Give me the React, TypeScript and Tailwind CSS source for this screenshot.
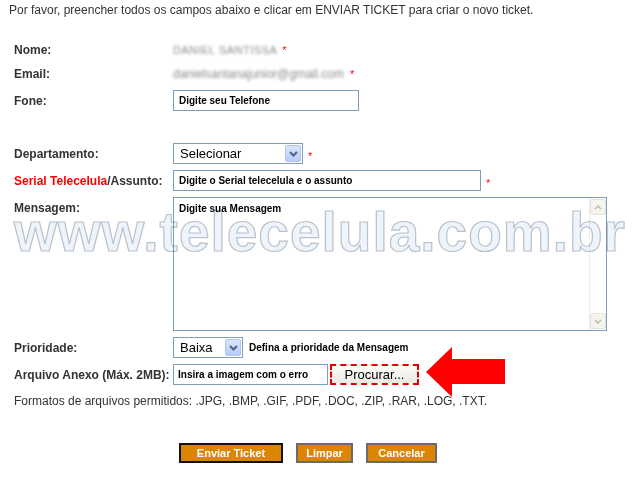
import React from 'react';

const labelCls = 'w-[159px] shrink-0 text-[12px] font-bold leading-[14px] text-[#333]';
const boxCls = 'flex items-center border border-[#7f9db9] bg-white';

function Star({ className = '' }: { className?: string }) {
  return <span className={`text-[11px] leading-[11px] text-[#ff0000] ${className}`}>*</span>;
}

function DropButton() {
  return (
    <div className="flex h-[17px] w-[16px] shrink-0 items-center justify-center rounded-[2px] border border-[#b1c5f3] bg-gradient-to-b from-[#dbe6fe] to-[#b6cbf8]">
      <svg width="9" height="6" viewBox="0 0 9 6">
        <path d="M1 1l3.5 3.5L8 1" stroke="#4d6185" strokeWidth="2" fill="none" />
      </svg>
    </div>
  );
}

function Select({ value, width }: { value: string; width: string }) {
  return (
    <div className={`${boxCls} h-[21px] ${width} p-[1px]`}>
      <span className="flex-1 pl-[5px] text-[13px] leading-[17px] text-black">{value}</span>
      <DropButton />
    </div>
  );
}

function ScrollArrow({ up }: { up?: boolean }) {
  return (
    <div className="flex h-[16px] w-[16px] items-center justify-center rounded-[2px] border border-[#e3e2db] bg-[#f5f4ef]">
      <svg width="8" height="5" viewBox="0 0 8 5">
        <path d={up ? 'M1 4l3-3 3 3' : 'M1 1l3 3 3-3'} stroke="#b8b8b0" strokeWidth="1.4" fill="none" />
      </svg>
    </div>
  );
}

function OrangeButton({ label, width, focused }: { label: string; width: string; focused?: boolean }) {
  return (
    <div
      className={`flex h-[20px] ${width} items-center justify-center border-2 ${
        focused ? 'border-[#111]' : 'border-[#6b6b6b]'
      } bg-[#dc8500] text-[11px] font-bold text-white`}
    >
      {label}
    </div>
  );
}

export default function App() {
  return (
    <div className="relative h-[480px] w-[640px] overflow-hidden bg-white font-['Liberation_Sans',Arial,sans-serif] text-[#333]">
      <div className="mt-[3px] h-[14px] pl-[9px] text-[12px] leading-[14px]">
        Por favor, preencher todos os campos abaixo e clicar em ENVIAR TICKET para criar o novo ticket.
      </div>

      <div className="flex flex-col pl-[14px]">
        {/* Nome */}
        <div className="mt-[23px] flex h-[20px] items-center">
          <div className={labelCls}>Nome:</div>
          <span className="text-[11px] uppercase tracking-[0.5px] text-[#8a8a8a] blur-[1.4px]">Daniel Santissa</span>
          <Star className="ml-[5px]" />
        </div>

        {/* Email */}
        <div className="mt-[4px] flex h-[20px] items-center">
          <div className={labelCls}>Email:</div>
          <span className="text-[12px] text-[#8a8a8a] blur-[1.4px]">danielsantanajunior@gmail.com</span>
          <Star className="ml-[6px]" />
        </div>

        {/* Fone */}
        <div className="mt-[6px] flex h-[21px] items-center">
          <div className={labelCls}>Fone:</div>
          <div className={`${boxCls} h-[21px] w-[186px] pl-[5px] text-[10px] font-bold text-black`}>Digite seu Telefone</div>
        </div>

        {/* Departamento */}
        <div className="mt-[32px] flex h-[21px] items-center">
          <div className={labelCls}>Departamento:</div>
          <Select value="Selecionar" width="w-[130px]" />
          <Star className="ml-[5px] mt-[5px]" />
        </div>

        {/* Serial */}
        <div className="mt-[6px] flex h-[21px] items-center">
          <div className={labelCls}>
            <span className="text-[#ff0000]">Serial Telecelula</span>/Assunto:
          </div>
          <div className={`${boxCls} h-[21px] w-[308px] pl-[5px] text-[10px] font-bold text-black`}>
            Digite o Serial telecelula e o assunto
          </div>
          <Star className="ml-[5px] mt-[6px]" />
        </div>

        {/* Mensagem */}
        <div className="mt-[6px] flex h-[134px] items-start">
          <div className={`${labelCls} pt-[4px]`}>Mensagem:</div>
          <div className="flex h-[134px] w-[434px] border border-[#7f9db9] bg-white">
            <div className="flex-1 pl-[5px] pt-[5px] text-[10px] font-bold leading-[12px] text-black">Digite sua Mensagem</div>
            <div className="flex w-[17px] flex-col justify-between border-l border-[#ecece8] py-[1px] pr-[1px]">
              <ScrollArrow up />
              <ScrollArrow />
            </div>
          </div>
        </div>

        {/* Prioridade */}
        <div className="mt-[6px] flex h-[21px] items-center">
          <div className={labelCls}>Prioridade:</div>
          <Select value="Baixa" width="w-[70px]" />
          <span className="ml-[6px] text-[10px] font-bold text-black">Defina a prioridade da Mensagem</span>
        </div>

        {/* Arquivo */}
        <div className="mt-[6px] flex h-[21px] items-center">
          <div className={labelCls}>Arquivo Anexo (Máx. 2MB):</div>
          <div className={`${boxCls} h-[21px] w-[155px] pl-[4px] text-[10px] font-bold text-black`}>Insira a imagem com o erro</div>
          <div className="ml-[2px] flex h-[21px] w-[89px] items-center justify-center border-2 border-dashed border-[#e10000] bg-gradient-to-b from-[#fbfbf9] to-[#eceae2] text-[13px] text-black">
            Procurar...
          </div>
        </div>

        {/* Formatos */}
        <div className="mt-[9px] h-[14px] text-[12px] leading-[14px]">
          Formatos de arquivos permitidos: .JPG, .BMP, .GIF, .PDF, .DOC, .ZIP, .RAR, .LOG, .TXT.
        </div>
      </div>

      {/* Buttons */}
      <div className="mt-[35px] flex gap-[13px] pl-[179px]">
        <OrangeButton label="Enviar Ticket" width="w-[104px]" focused />
        <OrangeButton label="Limpar" width="w-[57px]" />
        <OrangeButton label="Cancelar" width="w-[71px]" />
      </div>

      {/* Watermark */}
      <div className="pointer-events-none absolute left-[14px] top-[205px] whitespace-nowrap text-[55px] font-bold leading-[55px] tracking-[1px] text-[#edf4fc] mix-blend-multiply [-webkit-text-stroke:1.2px_#bcc2c9]">
        www.telecelula.com.br
      </div>

      {/* Red arrow annotation */}
      <svg className="absolute left-[424px] top-[345px]" width="84" height="54" viewBox="0 0 84 54">
        <polygon points="2,27 28,2 28,14 81,14 81,39 28,39 28,52" fill="#ff0000" />
      </svg>
    </div>
  );
}
